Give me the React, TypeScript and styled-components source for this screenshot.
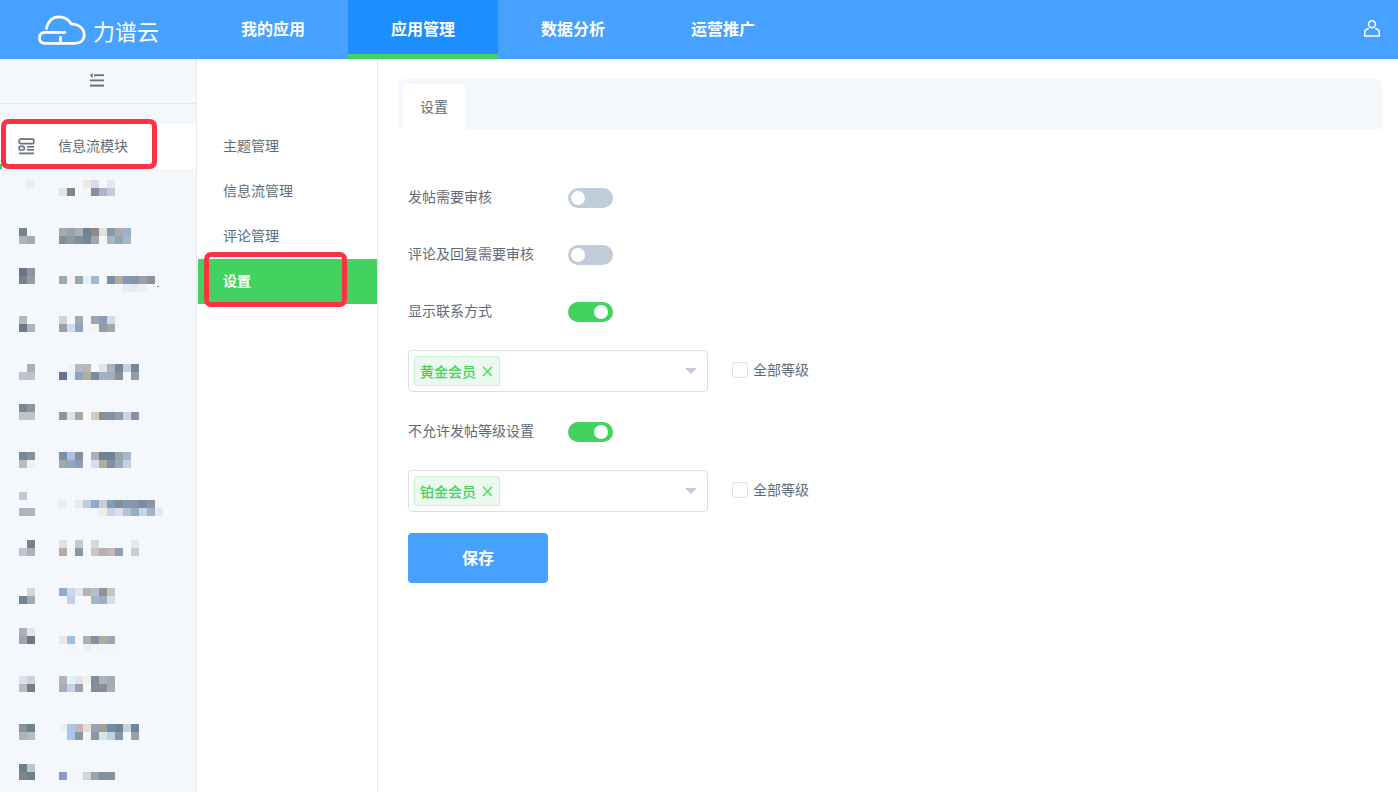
import styled, { createGlobalStyle } from 'styled-components';

const GlobalStyle = createGlobalStyle`
  html, body {
    margin: 0;
    padding: 0;
    height: 100%;
    background: #ffffff;
    font-family: "Noto Sans CJK SC", "Noto Sans", sans-serif;
  }
`;

const colors = {
  blue: '#46a1ff',
  blueDark: '#1d8efe',
  green: '#43d260',
  panel: '#f4f7fb',
  line: '#e3e8ef',
  text: '#5f6b7a',
  red: '#fd3344',
  off: '#c0ccd9',
};

const Page = styled.div`
  display: flex;
  flex-direction: column;
  height: 100vh;
  overflow: hidden;
`;

const Header = styled.header`
  display: flex;
  align-items: stretch;
  height: 59px;
  flex-shrink: 0;
  background: ${colors.blue};
  color: #ffffff;
`;

const Brand = styled.div`
  display: flex;
  align-items: center;
  gap: 7px;
  width: 198px;
  padding-left: 38px;
  box-sizing: border-box;
`;

const BrandName = styled.span`
  font-size: 22px;
  font-weight: 400;
  line-height: 30px;
  margin-top: 1px;
`;

const NavTab = styled.div<{ $active?: boolean }>`
  display: flex;
  align-items: center;
  justify-content: center;
  width: 150px;
  box-sizing: border-box;
  padding-top: ${(p) => (p.$active ? '5px' : '0')};
  padding-bottom: 3px;
  font-size: 16px;
  font-weight: 700;
  background: ${(p) => (p.$active ? colors.blueDark : 'transparent')};
  border-bottom: ${(p) => (p.$active ? `5px solid ${colors.green}` : '0')};
`;

const HeaderRight = styled.div`
  display: flex;
  align-items: center;
  margin-left: auto;
  padding: 0 18px 2px 0;
`;

const Body = styled.div`
  display: flex;
  flex: 1;
  min-height: 0;
`;

const Sidebar = styled.aside`
  width: 197px;
  flex-shrink: 0;
  box-sizing: border-box;
  background: ${colors.panel};
  border-right: 1px solid ${colors.line};
`;

const Collapse = styled.div`
  display: flex;
  align-items: center;
  justify-content: center;
  height: 45px;
  box-sizing: border-box;
  border-bottom: 1px solid ${colors.line};
  margin-bottom: 20px;
  padding: 0 4px 3px 0;
`;

const ActiveMenu = styled.div`
  position: relative;
  display: flex;
  align-items: center;
  height: 45px;
  box-sizing: border-box;
  padding-left: 18px;
  background: #ffffff;
  color: ${colors.text};
  font-size: 14px;
`;

const ActiveLabel = styled.span`
  margin: -4px 0 0 23px;
`;

const GreenMark = styled.span`
  position: absolute;
  left: 0;
  bottom: 0;
  width: 2px;
  height: 5px;
  background: ${colors.green};
`;

const Highlight = styled.span<{ $left: number; $top: number; $width: number; $height: number }>`
  position: absolute;
  left: ${(p) => p.$left}px;
  top: ${(p) => p.$top}px;
  width: ${(p) => p.$width}px;
  height: ${(p) => p.$height}px;
  box-sizing: border-box;
  border: 5px solid ${colors.red};
  border-radius: 7px;
  pointer-events: none;
`;

const BlurRow = styled.div`
  display: flex;
  align-items: flex-start;
  height: 45px;
  padding-left: 19px;
`;

const BlurIcon = styled.svg<{ $top: number }>`
  display: block;
  margin-top: ${(p) => p.$top}px;
  flex-shrink: 0;
`;

const BlurLabel = styled.svg<{ $top: number }>`
  display: block;
  margin-top: ${(p) => p.$top}px;
  margin-left: 24px;
  flex-shrink: 0;
`;

const SubNav = styled.nav`
  width: 181px;
  flex-shrink: 0;
  box-sizing: border-box;
  padding: 65px 0 0 1px;
  border-right: 1px solid ${colors.line};
`;

const SubItem = styled.div<{ $active?: boolean }>`
  position: relative;
  display: flex;
  align-items: center;
  height: 45px;
  box-sizing: border-box;
  padding: 0 0 4px 25px;
  font-size: 14px;
  font-weight: ${(p) => (p.$active ? 700 : 400)};
  color: ${(p) => (p.$active ? '#ffffff' : colors.text)};
  background: ${(p) => (p.$active ? colors.green : 'transparent')};
`;

const Main = styled.main`
  flex: 1;
  min-width: 0;
  padding: 20px 16px 0 20px;
`;

const TabBar = styled.div`
  display: flex;
  align-items: flex-end;
  height: 50px;
  padding-left: 5px;
  background: ${colors.panel};
  border-radius: 6px 6px 0 0;
`;

const Tab = styled.div`
  display: flex;
  align-items: center;
  justify-content: center;
  width: 62px;
  height: 45px;
  box-sizing: border-box;
  padding-bottom: 2px;
  background: #ffffff;
  border-radius: 4px 4px 0 0;
  font-size: 14px;
  color: ${colors.text};
`;

const Form = styled.div`
  display: flex;
  flex-direction: column;
  align-items: flex-start;
  padding: 59px 0 0 10px;
`;

const ToggleRow = styled.div<{ $gap: number }>`
  display: flex;
  align-items: center;
  height: 20px;
  margin-top: ${(p) => p.$gap}px;
`;

const RowLabel = styled.span`
  width: 160px;
  margin-top: -4px;
  font-size: 14px;
  color: ${colors.text};
`;

const Toggle = styled.span<{ $on?: boolean }>`
  display: flex;
  align-items: center;
  justify-content: ${(p) => (p.$on ? 'flex-end' : 'flex-start')};
  width: 45px;
  height: 20px;
  box-sizing: border-box;
  padding: ${(p) => (p.$on ? '0 5px 0 0' : '0 0 0 3px')};
  border-radius: 10px;
  background: ${(p) => (p.$on ? colors.green : colors.off)};
`;

const Knob = styled.span`
  width: 14px;
  height: 14px;
  border-radius: 50%;
  background: #ffffff;
`;

const SelectRow = styled.div`
  display: flex;
  align-items: center;
  margin-top: 28px;
`;

const Select = styled.div`
  display: flex;
  align-items: center;
  justify-content: space-between;
  width: 300px;
  height: 42px;
  box-sizing: border-box;
  padding: 0 10px 0 5px;
  border: 1px solid #dcdfe6;
  border-radius: 4px;
`;

const Tag = styled.span`
  display: flex;
  align-items: center;
  height: 30px;
  box-sizing: border-box;
  padding: 0 6px 0 5px;
  gap: 6px;
  border: 1px solid #c6f1d0;
  border-radius: 3px;
  background: #ecf9ef;
  color: ${colors.green};
  font-size: 14px;
  font-weight: 500;
`;

const Caret = styled.span`
  width: 0;
  height: 0;
  border-left: 6px solid transparent;
  border-right: 6px solid transparent;
  border-top: 6px solid ${colors.off};
`;

const CheckLabel = styled.label`
  display: flex;
  align-items: center;
  gap: 5px;
  margin: 0 0 2px 24px;
  font-size: 14px;
  color: ${colors.text};
`;

const CheckText = styled.span`
  margin-top: -2px;
`;

const CheckBox = styled.span`
  width: 16px;
  height: 16px;
  box-sizing: border-box;
  border: 1px solid #dcdfe6;
  border-radius: 3px;
  background: #ffffff;
`;

const SaveButton = styled.button`
  width: 140px;
  height: 50px;
  margin-top: 21px;
  padding: 0 0 2px;
  border: 0;
  border-radius: 4px;
  background: ${colors.blue};
  color: #ffffff;
  font-family: inherit;
  font-size: 16px;
  font-weight: 700;
`;

type BlurItem = {
  iconTop: number;
  labelTop: number;
  icon: string[][];
  label: string[][];
  speck?: boolean;
};

// pixelated menu entries: each string is one 8px block, '' leaves a hole
const blurItems: BlurItem[] = [
  {
    iconTop: 11, labelTop: 11,
    icon: [['', '#e9edf1']],
    label: [
      ['', '', '', '#efe9e6', '#d3dded', '', '#e5e9ee'],
      ['#e1e5ea', '#7b8797', '', '#f3f6f8', '#8b8d9d', '#aab4d6', '#c5ccd6'],
    ],
  },
  {
    iconTop: 14, labelTop: 14,
    icon: [['#74848f', ''], ['#adb5c0', '#a2abb5']],
    label: [
      ['#a4abb2', '#93a5b0', '#a6b0b6', '#738391', '#928790', '#e2e2d8', '#8299b0', '#b2a4ab', '#98b1cc'],
      ['#838f9c', '#8f9aa0', '#7f8e9c', '#738699', '#aaa39e', '#f4f6f8', '#abb3bc', '#93a5b3', '#9bb9d3'],
    ],
  },
  {
    iconTop: 9, labelTop: 17, speck: true,
    icon: [['#687685', '#8b98a3'], ['#75858f', '#919ea8']],
    label: [
      ['#9caab3', '#f3f2f3', '#99a9b2', '#e9f0f8', '#a0b7d1', '', '#7e8da0', '#b5a8a0', '#829ab9', '#8595a6', '#9a9fae', '#8c919c'],
      ['', '', '', '', '', '', '', '', '#e7ecf5', '#e7ebf5', '#e9eff8', ''],
    ],
  },
  {
    iconTop: 12, labelTop: 12,
    icon: [['#b0bac3', ''], ['#6b7a8a', '#a9b4be']],
    label: [
      ['#d6d2d0', '', '#9faab4', '', '#a0a2b8', '#8a9ab5', '#c7e0ea'],
      ['#9a9fa5', '#cadeed', '#8ea6bf', '', '#f3f4ea', '#939c9f', '#a6a8a6'],
    ],
  },
  {
    iconTop: 15, labelTop: 15,
    icon: [['', '#a7b3bc'], ['#bbc4cd', '#bbc4cd']],
    label: [
      ['', '#eef3f8', '#b9bbc2', '#b9b8b0', '', '#e1e4ea', '#abb2ba', '#75889b', '#c0d3e1', '#75899b'],
      ['#667488', '#e1f2fb', '#8ca5c0', '#aeaea3', '#788ca2', '#a0b3c2', '#a5adb6', '#82959f', '#f3f9fc', '#94a0a9'],
    ],
  },
  {
    iconTop: 10, labelTop: 18,
    icon: [['#7a8896', '#8a96a1'], ['#bbc5cf', '#b9c4cc']],
    label: [['#9c9390', '#d9e4f3', '#a5a8a5', '', '#dfc8b8', '#8a8ea5', '#8a8ca2', '#8ca1ae', '#ced3e1', '#8695a3']],
  },
  {
    iconTop: 13, labelTop: 13,
    icon: [['#788797', '#83929f'], ['#b5bdc7', '#edf0f4']],
    label: [
      ['#7d8fa3', '#a8c2e6', '#8a8f97', '', '#a9b2b5', '#727f91', '#6a8492', '#9aa6a8', '#a5b5d6'],
      ['#a0a9ac', '#97a4c0', '#81a0bb', '#f5f7fa', '#d6deeb', '#aeaea3', '#838ea8', '#9aa9bb', '#c0d3dc'],
    ],
  },
  {
    iconTop: 8, labelTop: 16,
    icon: [['#bfc8d2', ''], ['', ''], ['#abb5bf', '#aeb7c0']],
    label: [
      ['#e9edf2', '', '#e1edf3', '#bdcbe5', '#8babc8', '#c9ced9', '#8a9ab0', '#7f8f9c', '#8499b5', '#8796a6', '#7a8ca5', '#92959d', ''],
      ['', '', '', '', '', '#f4ebe3', '#c4d5e9', '#e0dfe3', '#acc4da', '#9aaabf', '#c3d6f0', '#a7b4c0', '#dcecf7'],
    ],
  },
  {
    iconTop: 11, labelTop: 11,
    icon: [['', '#73848f'], ['#bdc6d0', '#a9b3bd']],
    label: [
      ['#e5dfdf', '', '#bdccdc', '', '#d9d9dc', '', '', '', '', '#e5e8ef'],
      ['#b6aaa3', '', '#8796a5', '', '#cdc3c0', '#b5b3b2', '#c5b4b9', '#8ba1b2', '', '#c8ced7'],
    ],
  },
  {
    iconTop: 14, labelTop: 14,
    icon: [['', '#cfd7e0'], ['#728290', '#a1abb5']],
    label: [
      ['#8cadcd', '#cdd8e5', '#e1e6ee', '#b9afab', '#acc3d0', '#8b92a3', '#c5c7b8'],
      ['', '#bdd2ea', '#f3f6fa', '', '#a9b4c1', '#9eafbd', '#cfdfe8'],
    ],
  },
  {
    iconTop: 9, labelTop: 17,
    icon: [['#a9b0bb', '#e2e5ec'], ['#9ca6b1', '#69798a']],
    label: [
      ['#ece7df', '#9fc0d9', '', '#adb0b0', '#868e9f', '#aeaba4', '#8eaac3'],
      ['', '#f2f5fa', '', '#ecf0f4', '#f2f4f8', '#f2f5f9', '#f3f6f9'],
    ],
  },
  {
    iconTop: 12, labelTop: 12,
    icon: [['#dce0e8', '#ccd2dc'], ['#b5bec5', '#6f808d']],
    label: [
      ['#afb6be', '#e0f2fa', '#e0e6ea', '#f2f2ec', '#828d9c', '#a8b3bc', '#9fabb6'],
      ['#a1aec3', '#c3d1ed', '#a69fa6', '', '#7f8d9c', '#8e8c99', '#a3b0b8'],
    ],
  },
  {
    iconTop: 15, labelTop: 15,
    icon: [['#87949f', '#71818e'], ['#acb5be', '#b3bdc7']],
    label: [
      ['#e9eef7', '#abc6ea', '#c5b5b9', '#e5dcd2', '#97a3ae', '#a59b95', '#7189ac', '#72858f', '#c0d2e0', '#72869a'],
      ['', '#abc6ea', '#8998a8', '#f0f5f7', '#8898a9', '#d4e5e3', '#bad3e5', '#8598a8', '#f2f9fc', '#93a2ac'],
    ],
  },
  {
    iconTop: 10, labelTop: 18,
    icon: [['#6f808d', '#bcc6ce'], ['#778796', '#6f7f8b']],
    label: [['#88a0bf', '', '#f2f5f9', '#d4d4de', '#95a3a7', '#7f8d9e', '#85929e']],
  },
];

function Blocks({ rows }: { rows: string[][] }) {
  return (
    <>
      {rows.map((row, y) =>
        row.map((fill, x) => (fill ? <rect key={`${x}-${y}`} x={x * 8} y={y * 8} width={8} height={8} fill={fill} /> : null)),
      )}
    </>
  );
}

function BlurMenuItem({ item }: { item: BlurItem }) {
  const labelCols = Math.max(...item.label.map((r) => r.length));
  return (
    <BlurRow>
      <BlurIcon $top={item.iconTop} width={16} height={item.icon.length * 8}>
        <Blocks rows={item.icon} />
      </BlurIcon>
      <BlurLabel $top={item.labelTop} width={labelCols * 8 + 4} height={item.label.length * 8}>
        <Blocks rows={item.label} />
        {item.speck && <rect x={98} y={10} width={2} height={1} fill="#3b8fd8" />}
      </BlurLabel>
    </BlurRow>
  );
}

function CloudLogo() {
  return (
    <svg width="48" height="30" viewBox="0 0 48 30" fill="none" stroke="#ffffff" strokeWidth="2.8" strokeLinecap="round" strokeLinejoin="round">
      <path d="M8.5 13.5C9.5 7 14 2 20.5 1.8C27 1.6 31 5 33.5 9.2C40 8.6 46.2 13 46.2 19.8C46.2 25.2 42.5 28.3 37.5 28.3H6.5C3.2 28.3 1.5 26 1.5 23C1.5 19.6 3.6 17.4 7 17.4H27" />
      <path d="M22.5 22.5V28" />
    </svg>
  );
}

function UserIcon() {
  return (
    <svg width="16" height="17" viewBox="0 0 16 17" fill="none" stroke="#ffffff" strokeWidth="1.6">
      <circle cx="8" cy="4.2" r="3.4" />
      <path d="M4.8 8.4L2.2 9.6C1.2 10.1 .8 10.8 .8 11.8V16H15.2V11.8C15.2 10.8 14.8 10.1 13.8 9.6L11.2 8.4" strokeLinejoin="round" />
    </svg>
  );
}

function CollapseIcon() {
  return (
    <svg width="15" height="14" viewBox="0 0 15 14" fill="none" stroke="#667382" strokeWidth="1.8">
      <path d="M5 2.2H15" />
      <path d="M3.6 .4L1.2 2.4L3.6 4.4" fill="#667382" strokeWidth="0.8" />
      <path d="M1 7.4H15" />
      <path d="M1 12.6H15" strokeWidth="2" />
    </svg>
  );
}

function ModuleIcon() {
  return (
    <svg width="17" height="17" viewBox="0 0 17 17" fill="none" stroke="#667382" strokeWidth="1.7">
      <rect x="1.2" y="1.2" width="14.6" height="4.4" rx="1.4" />
      <rect x="1.2" y="8.4" width="5" height="3.6" rx="1" />
      <path d="M9 8.8H16" />
      <path d="M9 11.8H16" />
      <path d="M1 15.4H16" strokeWidth="1.8" />
    </svg>
  );
}

function CloseIcon() {
  return (
    <svg width="11" height="11" viewBox="0 0 11 11" fill="none" stroke="#43d260" strokeWidth="1.2">
      <path d="M1 1L10 10M10 1L1 10" />
    </svg>
  );
}

function LevelSelect({ level }: { level: string }) {
  return (
    <SelectRow>
      <Select>
        <Tag>
          {level}
          <CloseIcon />
        </Tag>
        <Caret />
      </Select>
      <CheckLabel>
        <CheckBox />
        <CheckText>全部等级</CheckText>
      </CheckLabel>
    </SelectRow>
  );
}

function SettingToggle({ label, on, gap }: { label: string; on?: boolean; gap: number }) {
  return (
    <ToggleRow $gap={gap}>
      <RowLabel>{label}</RowLabel>
      <Toggle $on={on}>
        <Knob />
      </Toggle>
    </ToggleRow>
  );
}

export default function App() {
  return (
    <Page>
      <GlobalStyle />
      <Header>
        <Brand>
          <CloudLogo />
          <BrandName>力谱云</BrandName>
        </Brand>
        <NavTab>我的应用</NavTab>
        <NavTab $active>应用管理</NavTab>
        <NavTab>数据分析</NavTab>
        <NavTab>运营推广</NavTab>
        <HeaderRight>
          <UserIcon />
        </HeaderRight>
      </Header>
      <Body>
        <Sidebar>
          <Collapse>
            <CollapseIcon />
          </Collapse>
          <ActiveMenu>
            <ModuleIcon />
            <ActiveLabel>信息流模块</ActiveLabel>
            <GreenMark />
            <Highlight $left={1} $top={-5} $width={156} $height={50} />
          </ActiveMenu>
          {blurItems.map((item, i) => (
            <BlurMenuItem key={i} item={item} />
          ))}
        </Sidebar>
        <SubNav>
          <SubItem>主题管理</SubItem>
          <SubItem>信息流管理</SubItem>
          <SubItem>评论管理</SubItem>
          <SubItem $active>
            设置
            <Highlight $left={6} $top={-7} $width={143} $height={55} />
          </SubItem>
        </SubNav>
        <Main>
          <TabBar>
            <Tab>设置</Tab>
          </TabBar>
          <Form>
            <SettingToggle label="发帖需要审核" gap={0} />
            <SettingToggle label="评论及回复需要审核" gap={37} />
            <SettingToggle label="显示联系方式" on gap={37} />
            <LevelSelect level="黄金会员" />
            <SettingToggle label="不允许发帖等级设置" on gap={30} />
            <LevelSelect level="铂金会员" />
            <SaveButton>保存</SaveButton>
          </Form>
        </Main>
      </Body>
    </Page>
  );
}
